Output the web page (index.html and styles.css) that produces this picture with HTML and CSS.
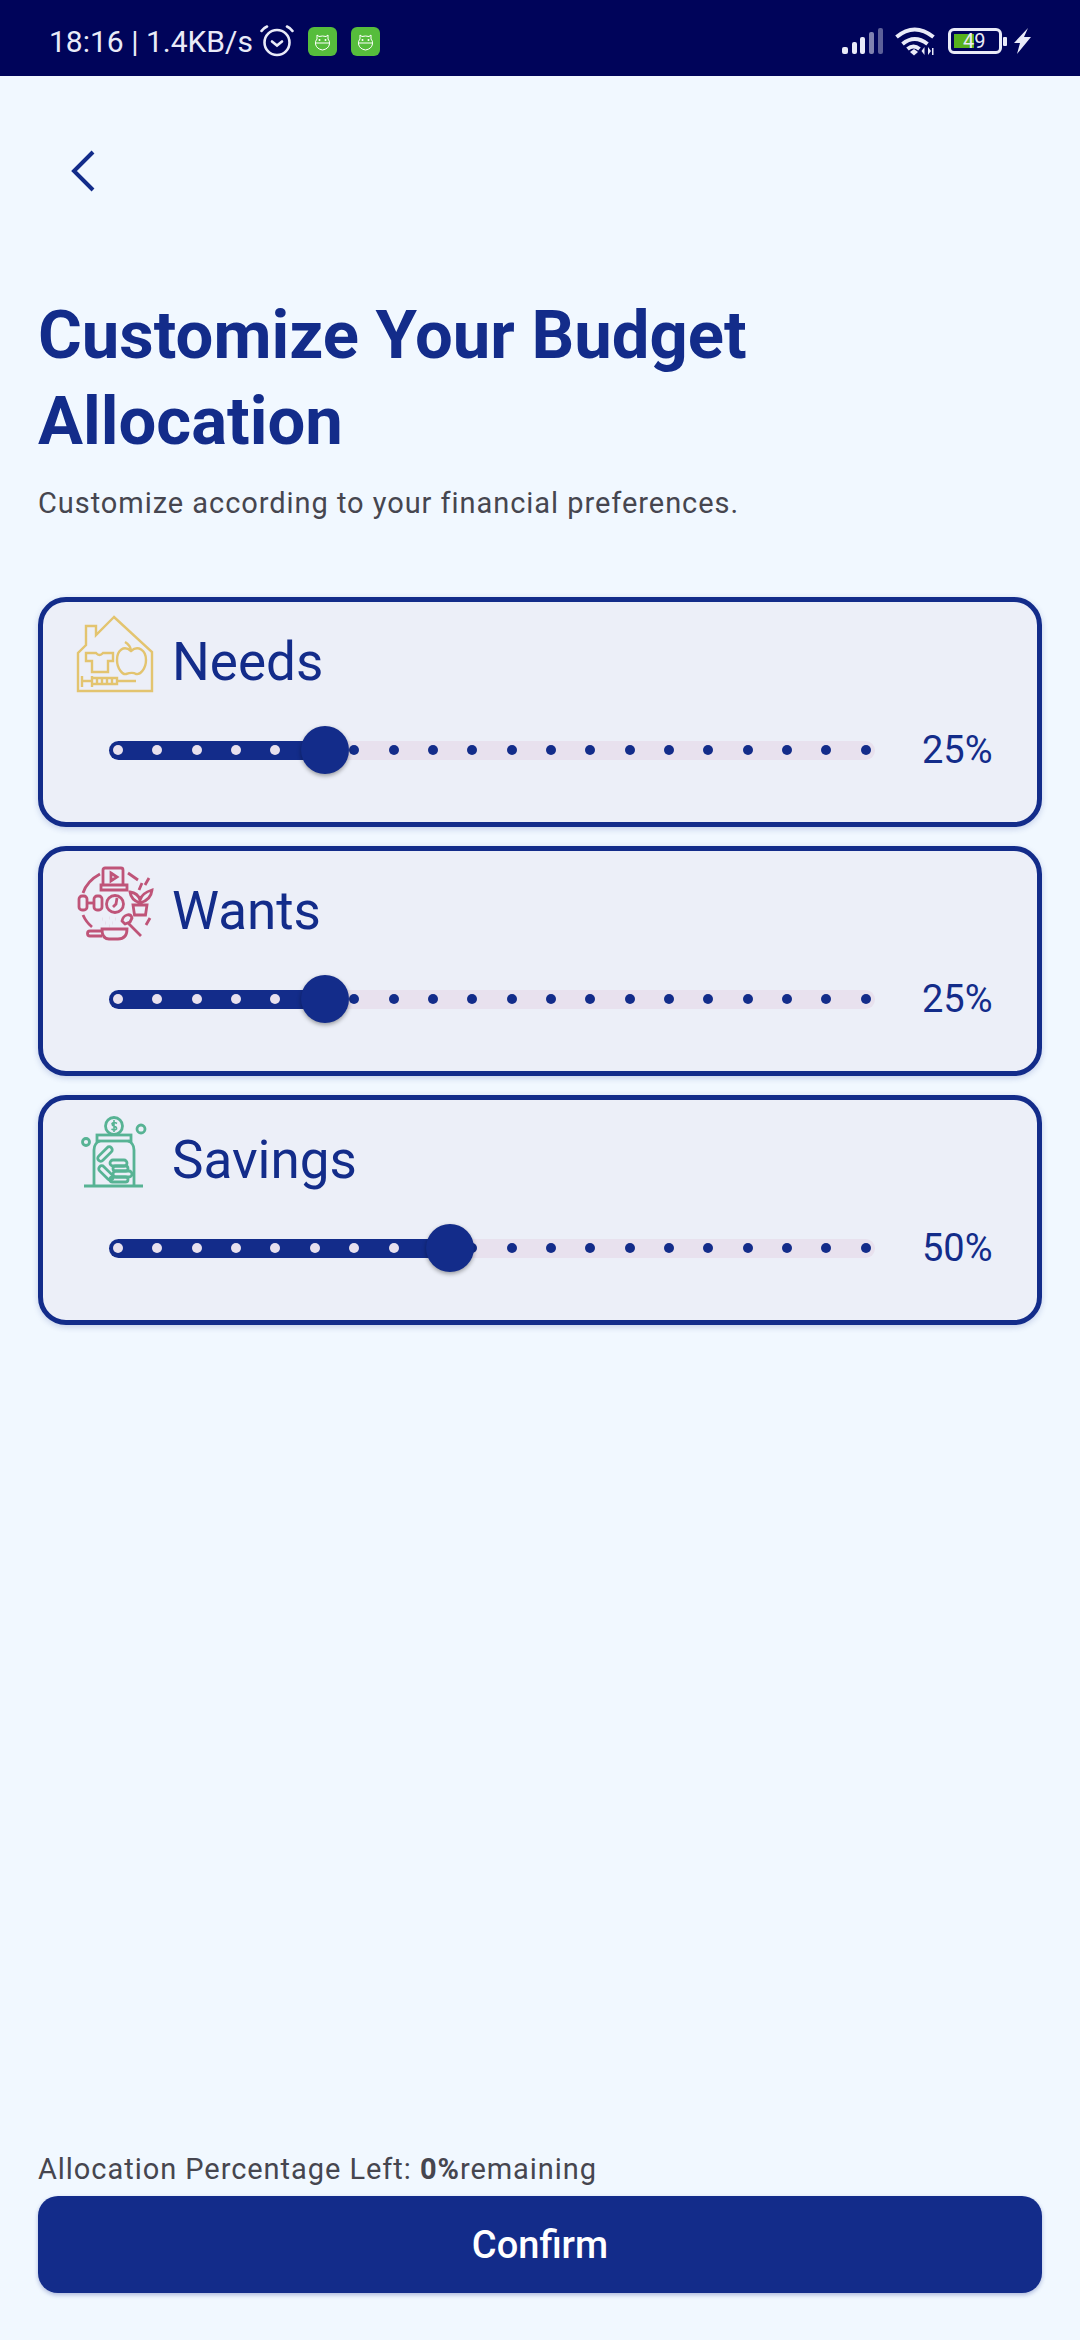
FILE: index.html
```html
<!DOCTYPE html>
<html lang="en">
<head>
    <meta charset="UTF-8">
    <meta name="viewport" content="width=device-width, initial-scale=1.0">
    <title>Customize Your Budget Allocation</title>
    <link rel="stylesheet" href="styles.css">
</head>
<body>
    <div class="page">
        <!-- Status bar -->
        <div class="status-bar">
            <div class="status-left">
                <span class="status-text">18:16 | 1.4KB/s</span>
                <svg class="alarm" width="34" height="32" viewBox="0 0 34 32" fill="none" stroke="#e9ebf8" stroke-width="2.600" stroke-linecap="round">
                    <circle cx="17" cy="17.500" r="12.500"/>
                    <path d="M12 16.500l5 4 5-4"/>
                    <path d="M1.500 6q2-3 5.500-4.500M32.500 6q-2-3-5.500-4.500"/>
                </svg>
                <svg class="app-icon" width="29" height="29" viewBox="0 0 29 29">
                    <rect width="29" height="29" rx="6" fill="#56bd3c"/>
                    <path d="M9 8l2 1.500q3.500-1 7 0l2-1.500v4q2 2 1.500 5q-1 5-7 6q-6-1-7-6q-.5-3 1.500-5z" fill="none" stroke="#fff" stroke-width="1"/>
                    <path d="M8 16h13" stroke="#fff" stroke-width="1"/>
                    <circle cx="11.500" cy="13" r="1" fill="#fff"/>
                    <circle cx="17.500" cy="13" r="1" fill="#fff"/>
                </svg>
                <svg class="app-icon second" width="29" height="29" viewBox="0 0 29 29">
                    <rect width="29" height="29" rx="6" fill="#56bd3c"/>
                    <path d="M9 8l2 1.500q3.500-1 7 0l2-1.500v4q2 2 1.500 5q-1 5-7 6q-6-1-7-6q-.5-3 1.500-5z" fill="none" stroke="#fff" stroke-width="1"/>
                    <path d="M8 16h13" stroke="#fff" stroke-width="1"/>
                    <circle cx="11.500" cy="13" r="1" fill="#fff"/>
                    <circle cx="17.500" cy="13" r="1" fill="#fff"/>
                </svg>
            </div>
            <div class="status-right">
                <svg width="41" height="26" viewBox="0 0 41 26" fill="#e9ebf8">
                    <rect x="0" y="19" width="6" height="7" rx="2"/>
                    <rect x="10" y="14" width="5" height="12" rx="2"/>
                    <rect x="18" y="9" width="5" height="17" rx="2"/>
                    <rect x="27" y="4" width="5" height="22" rx="2" opacity=".55"/>
                    <rect x="36" y="0" width="5" height="26" rx="2" opacity=".4"/>
                </svg>
                <svg class="wifi" width="40" height="30" viewBox="0 0 40 30" fill="none" stroke="#e9ebf8" stroke-width="4">
                    <path d="M1.500 11q18-15 37 0"/>
                    <path d="M7.500 18q12-10 25 0"/>
                    <path d="M13.500 24q6-5 12 0" transform="translate(-1 -1)"/>
                    <path d="M15 26l4-3 4 3-4 3.500z" fill="#e9ebf8" stroke="none"/>
                    <path d="M29.500 21v8l-3-4zM33 21v8l3-4z M37 22h1.500v7H37z" fill="#e9ebf8" stroke="none"/>
                </svg>
                <div class="battery">
                    <div class="battery-fill"></div>
                    <span class="battery-num">49</span>
                </div>
                <span class="battery-cap"></span>
                <svg width="17" height="26" viewBox="0 0 17 26">
                    <path d="M14 0L0 15h6L3 26 17 9h-7z" fill="#e9ebf8"/>
                </svg>
            </div>
        </div>

        <div class="content">
            <svg class="back" width="26" height="42" viewBox="0 0 26 42" fill="none" stroke="#132c8a" stroke-width="4">
                <path d="M23 2L4 21l19 19"/>
            </svg>

            <h1 class="title">Customize Your Budget Allocation</h1>
            <p class="subtitle">Customize according to your financial preferences.</p>

            <!-- Needs -->
            <div class="card">
                <div class="card-head">
                    <svg class="card-icon" width="80" height="80" viewBox="0 0 80 80" fill="none" stroke="#e3c46f" stroke-width="2.400">
                        <path d="M38 3L20 21V12H10V31L2 39V77H76V38z"/>
                        <path d="M20 39q3.500 4 7 0h10v8h-5v11H16V47h-6v-8z"/>
                        <path d="M49 28q5 3 6 8M55 37C48 31 41 36 41 46C41 55 47 61 50 60C53 59 57 58 60 60C64 61 70 55 70 46C70 36 62 31 55 37z"/>
                        <path d="M6 62v11M6 67h10M16 62v11M16 64h25v6H16zM21 64v6M26 64v6M31 64v6M36 64v6M41 67h19"/>
                    </svg>
                    <span class="card-name">Needs</span>
                </div>
                <div class="slider-row">
                    <div class="slider">
                        <div class="track-on" style="width: 216px"></div>
                        <div class="dots">
                            <i class="on"></i><i class="on"></i><i class="on"></i><i class="on"></i><i class="on"></i><i class="on"></i>
                            <i></i><i></i><i></i><i></i><i></i><i></i><i></i><i></i><i></i><i></i><i></i><i></i><i></i><i></i>
                        </div>
                        <div class="thumb" style="left: 216px"></div>
                    </div>
                    <span class="percent">25%</span>
                </div>
            </div>

            <!-- Wants -->
            <div class="card">
                <div class="card-head">
                    <svg class="card-icon" width="80" height="80" viewBox="0 0 80 80" fill="none" stroke="#bf5478" stroke-width="2.800">
                        <path d="M29 5h16a2 2 0 0 1 2 2v15H27V7a2 2 0 0 1 2-2zM25 22h26v5H25z"/>
                        <path d="M35 10l6 4-6 4z"/>
                        <path d="M24 11Q11 18 7 30M52 10l10 7M7 52q3 7 9 12M74 55l-4 7"/>
                        <rect x="3" y="33" width="8" height="14" rx="3"/>
                        <rect x="18" y="33" width="8" height="14" rx="3"/>
                        <path d="M11 40h7"/>
                        <circle cx="39" cy="41" r="8.500"/>
                        <path d="M41 35l-1 6-3 3"/>
                        <path d="M57 42h14l-1.500 10h-11zM64 42v-9M64 37q-2-7-10-8q1 8 10 11M64 37q2-7 12-10q-1 10-12 13"/>
                        <path d="M63 27l3-7M69 22l4-7"/>
                        <path d="M26 56h.1M33 55h.1M39 56h.1M29 60h.1M36 60h.1M33 63h.1" stroke-width="3"/>
                        <path d="M46 58q1-5 5-6q4-1 5 3l-2 4-5 2zM52 60l13 13" stroke-linejoin="round"/>
                        <path d="M26 68H14a2.500 2.500 0 0 0 0 5H26M26 66h25q0 10-9 10H33q-7 0-7-10z"/>
                    </svg>
                    <span class="card-name">Wants</span>
                </div>
                <div class="slider-row">
                    <div class="slider">
                        <div class="track-on" style="width: 216px"></div>
                        <div class="dots">
                            <i class="on"></i><i class="on"></i><i class="on"></i><i class="on"></i><i class="on"></i><i class="on"></i>
                            <i></i><i></i><i></i><i></i><i></i><i></i><i></i><i></i><i></i><i></i><i></i><i></i><i></i><i></i>
                        </div>
                        <div class="thumb" style="left: 216px"></div>
                    </div>
                    <span class="percent">25%</span>
                </div>
            </div>

            <!-- Savings -->
            <div class="card">
                <div class="card-head">
                    <svg class="card-icon" width="80" height="80" viewBox="0 0 80 80" fill="none" stroke="#57b394" stroke-width="2.800">
                        <circle cx="38" cy="14" r="8.500"/>
                        <path d="M38 8v12M41 11.500q-3-2-5 0q0 2 2 2.500q3 1 2.500 3q-2 2-5 0" stroke-width="1.600"/>
                        <rect x="21" y="23" width="34" height="6"/>
                        <path d="M24 29q-6 2-6 9v35M52 29q6 2 6 9v35"/>
                        <circle cx="10" cy="30" r="3.500"/><circle cx="65" cy="17" r="4"/>
                        <rect x="20" y="39" width="18" height="6" rx="3" transform="rotate(-45 29 42)"/>
                        <rect x="21" y="58" width="18" height="6" rx="3" transform="rotate(45 30 61)"/>
                        <rect x="34" y="48" width="17" height="6" rx="3"/>
                        <rect x="37" y="54" width="15" height="5" rx="2.500"/>
                        <rect x="37" y="59" width="19" height="6" rx="3"/>
                        <rect x="34" y="65" width="18" height="5" rx="2.500"/>
                        <path d="M8 74h59"/>
                    </svg>
                    <span class="card-name">Savings</span>
                </div>
                <div class="slider-row">
                    <div class="slider">
                        <div class="track-on" style="width: 341px"></div>
                        <div class="dots">
                            <i class="on"></i><i class="on"></i><i class="on"></i><i class="on"></i><i class="on"></i><i class="on"></i><i class="on"></i><i class="on"></i><i class="on"></i>
                            <i></i><i></i><i></i><i></i><i></i><i></i><i></i><i></i><i></i><i></i><i></i>
                        </div>
                        <div class="thumb" style="left: 341px"></div>
                    </div>
                    <span class="percent">50%</span>
                </div>
            </div>

            <!-- Footer -->
            <div class="footer">
                <p class="left-note">Allocation Percentage Left: <b>0%</b>remaining</p>
                <button class="confirm" type="button">Confirm</button>
            </div>
        </div>
    </div>
</body>
</html>
```

FILE: styles.css
```css
* {
    box-sizing: border-box;
    margin: 0;
    padding: 0;
}

body {
    font-family: Roboto, sans-serif;
    background-color: #f1f8ff;
}

.page {
    width: 1080px;
    height: 2340px;
    display: flex;
    flex-direction: column;
}

/* Status bar */
.status-bar {
    height: 76px;
    background-color: #00045a;
    display: flex;
    justify-content: space-between;
    align-items: center;
    padding: 6px 49px 0 49px;
    flex-shrink: 0;
}

.status-left, .status-right {
    display: flex;
    align-items: center;
}

.status-text {
    font-size: 30px;
    color: #e9ebf8;
}

.alarm {
    margin-left: 7px;
}

.app-icon {
    margin-left: 14px;
}

.app-icon.second {
    margin-left: 14px;
}

.wifi {
    margin-left: 12px;
}

.battery {
    position: relative;
    width: 54px;
    height: 26px;
    margin-left: 13px;
    border: 3px solid #e9ebf8;
    border-radius: 6px;
    padding: 3px;
}

.battery-fill {
    width: 20px;
    height: 14px;
    background-color: #56b21e;
}

.battery-num {
    position: absolute;
    left: 12px;
    top: -2px;
    font-size: 20px;
    line-height: 24px;
    color: #e9ebf8;
}

.battery-cap {
    width: 4px;
    height: 9px;
    background-color: #e9ebf8;
    margin: 0 7px 0 1px;
    border-radius: 1px;
}

/* Main content */
.content {
    flex: 1;
    display: flex;
    flex-direction: column;
    padding: 74px 38px 47px;
}

.back {
    margin-left: 32px;
    flex-shrink: 0;
}

.title {
    font-size: 67px;
    font-weight: 700;
    line-height: 86px;
    color: #132c8a;
    margin-top: 100px;
    width: 800px;
}

.subtitle {
    font-size: 29px;
    line-height: 40px;
    letter-spacing: 0.95px;
    color: #46464f;
    margin-top: 19px;
    margin-bottom: 74px;
}

/* Cards */
.card {
    height: 230px;
    background-color: #eceff8;
    border: 5px solid #132c8a;
    border-radius: 28px;
    box-shadow: 0 2px 6px rgba(19, 44, 138, 0.2);
    padding: 12px 0 0 33px;
    margin-bottom: 19px;
    flex-shrink: 0;
}

.card-head {
    display: flex;
    align-items: center;
    height: 80px;
}

.card-icon {
    flex-shrink: 0;
}

.card-name {
    font-size: 53px;
    color: #132c8a;
    margin-left: 16px;
    margin-top: 16px;
}

.slider-row {
    display: flex;
    align-items: center;
    height: 44px;
    margin-top: 34px;
    padding-left: 33px;
}

.slider {
    position: relative;
    width: 766px;
    height: 19px;
    background-color: #e8e1ee;
    border-radius: 10px;
}

.track-on {
    position: absolute;
    left: 0;
    top: 0;
    height: 19px;
    background-color: #132c8a;
    border-radius: 10px 0 0 10px;
}

.dots {
    position: absolute;
    left: 4px;
    right: 4px;
    top: 4px;
    display: flex;
    justify-content: space-between;
}

.dots i {
    width: 10px;
    height: 10px;
    border-radius: 50%;
    background-color: #132c8a;
}

.dots i.on {
    background-color: #e8e1ee;
}

.thumb {
    position: absolute;
    top: -15px;
    width: 48px;
    height: 48px;
    margin-left: -24px;
    border-radius: 50%;
    background-color: #132c8a;
    box-shadow: 0 2px 4px rgba(0, 0, 0, 0.35);
}

.percent {
    font-size: 38px;
    color: #132c8a;
    margin-left: 47px;
}

/* Footer */
.footer {
    margin-top: auto;
}

.left-note {
    font-size: 29px;
    line-height: 40px;
    letter-spacing: 0.95px;
    color: #46464f;
    margin-bottom: 7px;
}

.confirm {
    width: 100%;
    height: 97px;
    border: none;
    border-radius: 20px;
    background-color: #132c8a;
    color: #fff;
    font-family: Roboto, sans-serif;
    font-size: 38px;
    font-weight: 500;
    box-shadow: 0 2px 4px rgba(19, 44, 138, 0.3);
}
```
